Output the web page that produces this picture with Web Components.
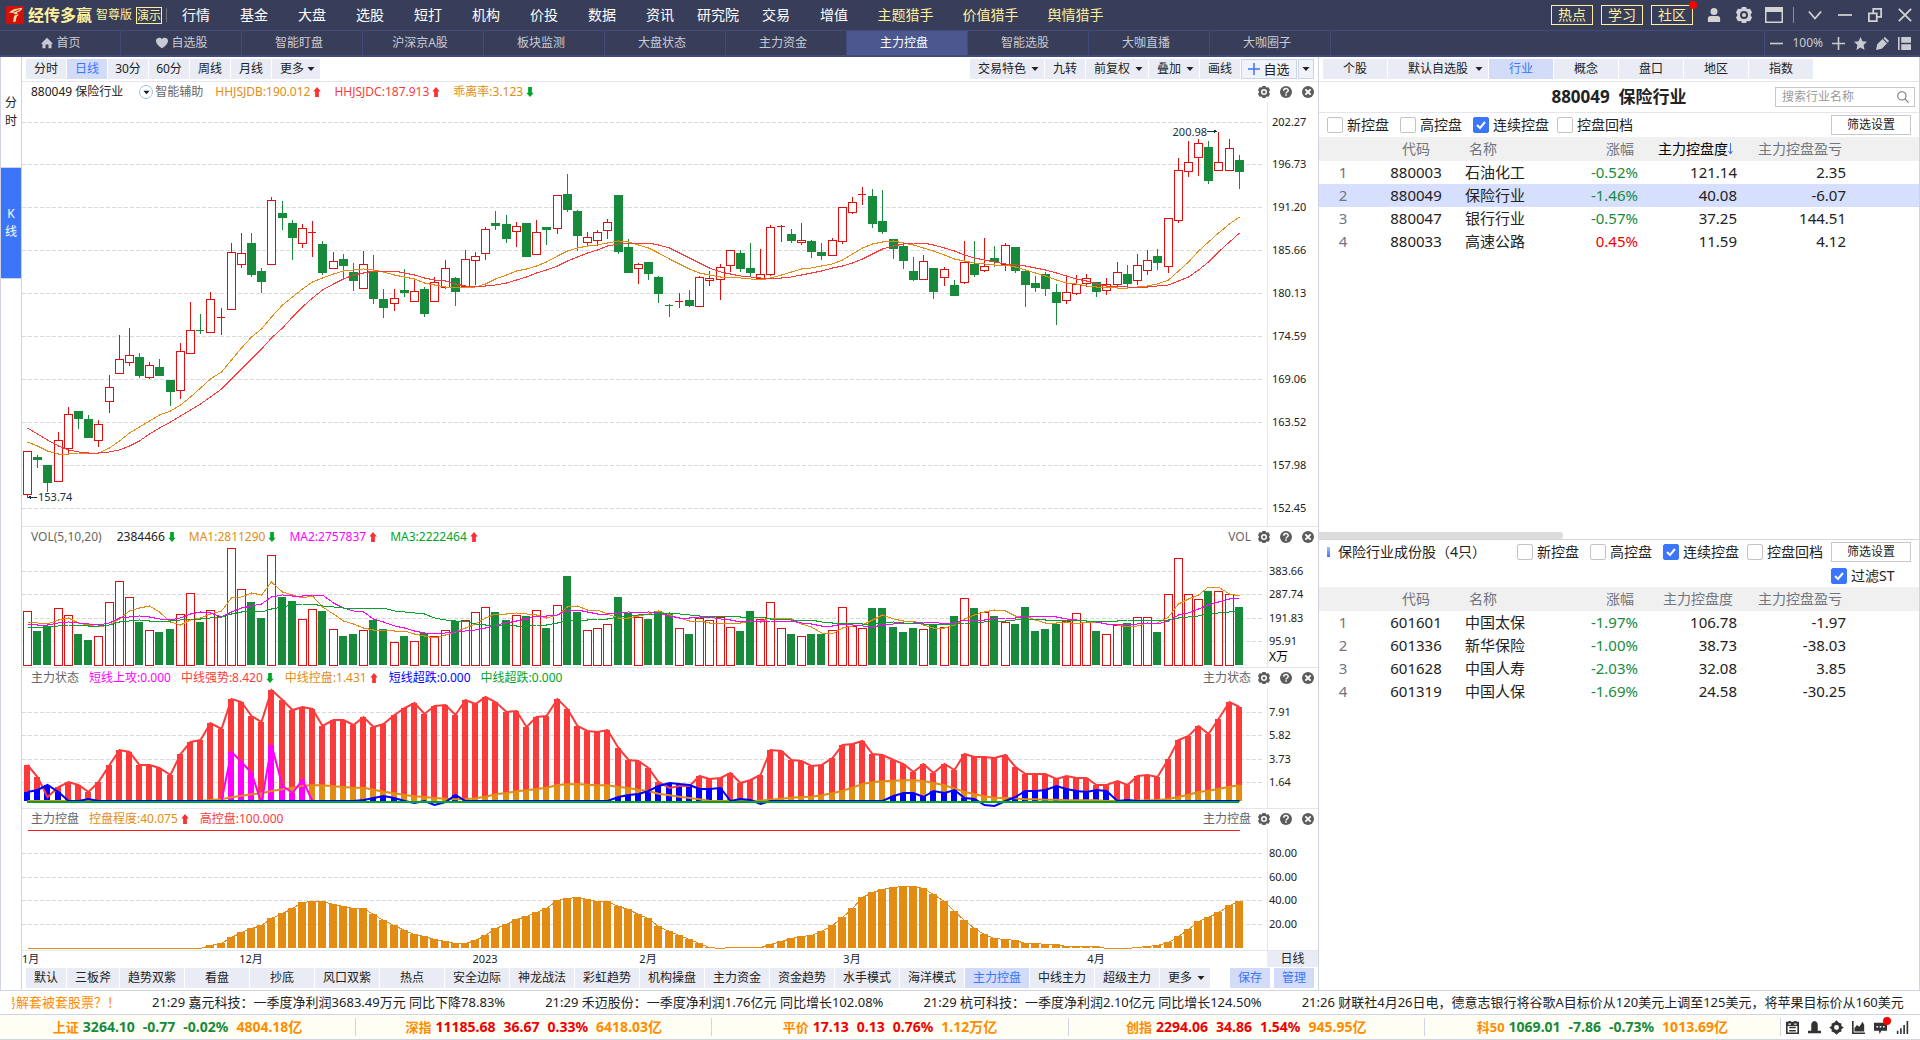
<!DOCTYPE html>
<html lang="zh-CN">
<head>
<meta charset="utf-8">
<title>经传多赢</title>
<style>
  html, body { margin: 0; height: 100%; }
  body {
    font: 12px/16px "Noto Sans", "Noto Sans CJK SC", sans-serif;
    color: #222;
    background: #fff;
  }
</style>
</head>
<body>
<trade-app></trade-app>

<script>
// ---------- helpers ----------
function define(name, html, Base = HTMLElement) {
  const template = document.createElement('template');
  template.innerHTML = html;
  customElements.define(name, class extends Base {
    constructor() {
      super();
      this.attachShadow({ mode: 'open' });
      this.shadowRoot.appendChild(template.content.cloneNode(true));
    }
  });
}

const ICONS = {
  home: '<path d="M8 1 0 9h2v6h4v-5h4v5h4V9h2z"/>',
  heart: '<path d="M8 15C2 11 0 8 0 5c0-4 6-5.500 8-2 2-3.500 8-2 8 2 0 3-2 6-8 10z"/>',
  user: '<circle cx="8" cy="4" r="4"/><path d="M1 16v-4q0-3 3-3h8q3 0 3 3v4z"/>',
  gear: '<path fill-rule="evenodd" d="M5 2 6 0h4l1 2 3-.2 2 3.400L14.500 8 16 10.800l-2 3.400-3-.2-1 2H6l-1-2-3 .2-2-3.400L1.500 8 0 5.200l2-3.400zM8 4a4 4 0 1 0 0 8 4 4 0 0 0 0-8z"/><circle cx="8" cy="8" r="2"/>',
  help: '<circle cx="8" cy="8" r="8"/><path d="M5 6.200C5 2.500 11 2.500 11 6 11 8 8 8 8 10" fill="none" stroke="#fff" stroke-width="2"/><rect x="7" y="11" width="2" height="2" fill="#fff"/>',
  cross: '<circle cx="8" cy="8" r="8"/><path d="m4.500 4.500 7 7m0-7-7 7" stroke="#fff" stroke-width="2.500"/>',
  panel: '<path fill-rule="evenodd" d="M-1 0h18v16H-1zM.5 5v9.500h15V5z"/>',
  chevron: '<path d="m1 4 7 8 7-8" fill="none" stroke="currentColor" stroke-width="2"/>',
  minus: '<path d="M0 7h16v2H0z"/>',
  plus: '<path d="M0 7h7V0h2v7h7v2H9v7H7V9H0z"/>',
  restore: '<path d="M1 6h9v9H1zM6 6V1h9v9h-5" fill="none" stroke="currentColor" stroke-width="2"/>',
  close: '<path d="m1 1 14 14m0-14L1 15" stroke="currentColor" stroke-width="2"/>',
  star: '<path d="m8 0 2.400 5.300 5.600.6-4.200 3.800L13 16l-5-3.200L3 16l1.200-6.300L0 5.900l5.600-.6z"/>',
  pencil: '<path d="m0 16 1.500-7L8 2.500l5.500 5.500L7 14.500zM9 1.500 11 0l5 5-1.500 2z"/>',
  layout: '<path d="M0 0h2v16H0zM4 0h12v7H4zM4 9h12v7H4z"/>',
  up: '<path d="m8 0 6 7h-3v9H5V7H2z"/>',
  down: '<path d="m8 16 6-7h-3V0H5v9H2z"/>',
  caret: '<path d="M1 4h14l-7 8z"/>',
  search: '<circle cx="6.500" cy="6.500" r="5.500" fill="none" stroke="currentColor" stroke-width="1.500"/><path d="m10.500 10.500 5 5" stroke="currentColor" stroke-width="1.500"/>',
  note: '<path fill-rule="evenodd" d="M0 1h3V0h3v1h4V0h3v1h3v15H0zM2 6v8h12V6zM3 3v1.500h3V3zM10 3v1.500h3V3z"/><path d="M4 7h8v2H4zM4 11h8v2H4z"/>',
  bell: '<path d="M4 12V5q0-4 4-5 4 1 4 5v7zM0 12h16v3H0z"/>',
  target: '<path fill-rule="evenodd" d="m8-1 3 3 3 1 0 3 3 2-3 2v3l-3 1-3 3-3-3-3-1v-3L-1 8l3-2V3l3-1zM8 5a3 3 0 1 0 0 6 3 3 0 0 0 0-6z"/>',
  chart: '<path d="M0 0h2v14h14v2H0z"/><path d="M3 13V9l3-4 3 2 4-6 2 4v8z"/>',
  chat: '<path d="M0 2h16v10H9l-2 4-1-4H0z"/><path d="M3 6h2v2H3zM7 6h2v2H7zM11 6h2v2h-2z" fill="#fff"/>',
  signal: '<path d="M1 12h2v4H1zM5 9h2v7H5zM9 5h2v11H9zM13 0h2v16h-2z"/>',
};

class AppIcon extends HTMLElement {
  constructor() {
    super();
    this.attachShadow({ mode: 'open' });
  }
  connectedCallback() {
    this.shadowRoot.innerHTML = `
      <style>
        :host { display: inline-block; width: 12px; height: 12px; flex: none; }
        svg { display: block; width: 100%; height: 100%; overflow: visible; fill: currentColor; }
      </style>
      <svg viewBox="0 0 16 16" aria-hidden="true">${ICONS[this.getAttribute('name')] || ''}</svg>`;
  }
}
customElements.define('app-icon', AppIcon);

// ---------- small controls ----------
define('flat-button', `
  <style>
    :host { display: block; height: 20px; min-width: 40px; }
    button {
      width: 100%; height: 100%; border: 0; padding: 0; font: inherit; color: #222;
      background: #e9ecf5; white-space: nowrap;
    }
    :host([active]) button { background: #d2dcf8; color: #3a75fa; }
    :host([outline]) button { background: #fff; border: 1px solid #c8c8c8; }
    :host([add]) button {
      background: #f1f3fa; border: 1px solid #ccd2e8; font-size: 13px;
      display: flex; align-items: center; justify-content: center;
    }
  </style>
  <button type="button"><slot></slot></button>`);

class FlatSelect extends HTMLElement {
  constructor() {
    super();
    this.attachShadow({ mode: 'open' });
  }
  connectedCallback() {
    const text = this.getAttribute('text');
    this.shadowRoot.innerHTML = `
      <style>
        :host { display: grid; height: 20px; align-items: center; background: #e9ecf5; }
        select {
          grid-area: 1 / 1; appearance: none; border: 0; background: none; font: inherit; color: #222;
          width: 100%; height: 20px; padding: 0 16px 0 8px; margin: 0; text-overflow: clip;
        }
        :host([center]) select { padding-left: 16px; text-align: center; text-align-last: center; }
        app-icon { grid-area: 1 / 1; justify-self: end; width: 8px; height: 8px; margin-right: 5px; pointer-events: none; }
      </style>
      <select aria-label="${text}"><option>${text}</option></select>
      <app-icon name="caret"></app-icon>`;
  }
}
customElements.define('flat-select', FlatSelect);

class CheckBox extends HTMLElement {
  constructor() {
    super();
    this.attachShadow({ mode: 'open' });
  }
  connectedCallback() {
    this.shadowRoot.innerHTML = `
      <style>
        :host { display: block; font-size: 14px; line-height: 20px; white-space: nowrap; }
        label { display: flex; align-items: center; gap: 4px; }
        .box { display: grid; width: 16px; height: 16px; }
        .box > * { grid-area: 1 / 1; }
        input {
          appearance: none; box-sizing: border-box; width: 16px; height: 16px; margin: 0;
          border: 1px solid #c4c4c4; border-radius: 2px; background: #fff;
        }
        input:checked { background: #3a75fa; border-color: #3a75fa; }
        svg { display: none; fill: none; stroke: #fff; stroke-width: 2; pointer-events: none; }
        input:checked + svg { display: block; }
      </style>
      <label>
        <span class="box">
          <input type="checkbox" ${this.hasAttribute('checked') ? 'checked' : ''}>
          <svg viewBox="0 0 16 16"><path d="m4 8 3 3 5-6"/></svg>
        </span>
        <slot></slot>
      </label>`;
  }
}
customElements.define('check-box', CheckBox);

// ---------- title bar ----------
define('title-bar', `
  <style>
    :host {
      display: flex; align-items: center; height: 30px; box-sizing: content-box;
      background: #383e5a; border-bottom: 1px solid #424c7c; color: #fff;
      font-size: 14px; line-height: 20px; white-space: nowrap;
    }
    .brand { display: flex; align-items: center; width: 167px; color: #fff09a; flex: none; }
    .logo { width: 20px; height: 20px; margin: 0 4px 0 6px; }
    b { font-size: 16px; margin-right: 4px; }
    small { font-size: 12px; }
    .demo { border: 1px solid #fff09a; font-size: 12px; line-height: 15px; margin-left: 4px; }
    .bar { width: 1px; height: 14px; background: #76716e; margin-left: 4px; }
    nav { display: flex; flex: 1; }
    a { color: inherit; text-decoration: none; width: 58px; text-align: center; }
    a.hot { width: 85px; color: #fff09a; }
    .links { display: flex; gap: 8px; margin-right: 14px; }
    .links a {
      position: relative; box-sizing: border-box; width: 42px; height: 20px; line-height: 18px;
      border: 1px solid #fff09a; color: #fff09a;
    }
    .dot { position: absolute; right: -5px; top: -5px; width: 8px; height: 8px; border-radius: 50%; background: #f00; }
    .tools { display: flex; align-items: center; color: #d3d3d3; }
    .tools app-icon { margin: 0 8px; width: 14px; height: 14px; }
    .tools app-icon.lg { width: 16px; height: 16px; margin: 0 7px; }
    .sep { width: 1px; height: 16px; background: #8b8e9c; margin: 0 6px 0 4px; }
    .win { display: flex; }
  </style>
  <div class="brand">
    <svg class="logo" viewBox="0 0 20 20"><rect width="20" height="20" rx="2" fill="#d4100c"/>
      <path d="M3 8Q7 3 12 3l6-1q-1 4-6 5l2 3q-3 1-3 7l-3 1q0-6 2-9Q6 6 3 8z" fill="#ffe2a0"/>
      <path d="m8 7 7-3M9 10l4-1" stroke="#d4100c" fill="none"/></svg>
    <b>经传多赢</b><small>智尊版</small><span class="demo">演示</span><span class="bar"></span>
  </div>
  <nav>
    <a href="#">行情</a><a href="#">基金</a><a href="#">大盘</a><a href="#">选股</a><a href="#">短打</a>
    <a href="#">机构</a><a href="#">价投</a><a href="#">数据</a><a href="#">资讯</a><a href="#">研究院</a>
    <a href="#">交易</a><a href="#">增值</a><a class="hot" href="#">主题猎手</a>
    <a class="hot" href="#">价值猎手</a><a class="hot" href="#">舆情猎手</a>
  </nav>
  <div class="links">
    <a href="#">热点</a><a href="#">学习</a><a href="#">社区<span class="dot"></span></a>
  </div>
  <div class="tools">
    <app-icon name="user" style="margin-left:0"></app-icon>
    <app-icon class="lg" name="gear"></app-icon>
    <app-icon class="lg" name="panel"></app-icon>
    <span class="sep"></span>
    <div class="win">
      <app-icon name="chevron"></app-icon><app-icon name="minus"></app-icon>
      <app-icon name="restore"></app-icon><app-icon name="close"></app-icon>
    </div>
  </div>`);

define('nav-tabs', `
  <style>
    :host {
      display: flex; height: 24px; background: #383e5a; border-bottom: 2px solid #424c7c;
      color: #c9cbd3; line-height: 24px; white-space: nowrap;
    }
    nav { display: flex; flex: 1; }
    a {
      box-sizing: border-box; width: 121px; border-right: 1px solid #424c7c; color: inherit; padding-right: 6px;
      text-decoration: none; display: flex; align-items: center; justify-content: center; gap: 3px;
    }
    a.pic { padding: 0 0 0 2px; }
    a.on { background: #4b578e; color: #fff; }
    .zoom { display: flex; align-items: center; gap: 9px; padding: 0 9px 0 5px; border-left: 1px solid #424c7c; }
    .zoom app-icon { width: 13px; height: 13px; }
  </style>
  <nav>
    <a class="pic" href="#"><app-icon name="home"></app-icon>首页</a>
    <a class="pic" href="#"><app-icon name="heart"></app-icon>自选股</a>
    <a href="#">智能盯盘</a><a href="#">沪深京A股</a><a href="#">板块监测</a><a href="#">大盘状态</a>
    <a href="#">主力资金</a><a href="#" class="on">主力控盘</a><a href="#">智能选股</a>
    <a href="#">大咖直播</a><a href="#">大咖圈子</a>
  </nav>
  <div class="zoom">
    <app-icon name="minus"></app-icon>100%<app-icon name="plus"></app-icon>
    <app-icon name="star"></app-icon><app-icon name="pencil"></app-icon><app-icon name="layout"></app-icon>
  </div>`);

define('side-strip', `
  <style>
    :host { display: flex; flex-direction: column; width: 20px; border: solid #cfd3e3; border-width: 0 1px; background: #fff; }
    button {
      border: 0; border-bottom: 1px solid #cfd3e3; background: none; padding: 0; font: inherit;
      line-height: 18px; color: #222; height: 111px; width: 20px;
    }
    button.on { background: #3a75fa; color: #fff; }
    span { display: block; }
  </style>
  <button type="button"><span>分</span><span>时</span></button>
  <button type="button" class="on"><span>K</span><span>线</span></button>`);

define('period-bar', `
  <style>
    :host {
      display: flex; gap: 1px; height: 20px; padding: 2px 4px; border-bottom: 1px solid #e4e6ee;
    }
    .gap { flex: 1; }
    .more { width: 48px; }
    app-icon { color: #3a75fa; margin-right: 3px; }
  </style>
  <flat-button>分时</flat-button><flat-button active>日线</flat-button><flat-button>30分</flat-button>
  <flat-button>60分</flat-button><flat-button>周线</flat-button><flat-button>月线</flat-button>
  <flat-select class="more" text="更多"></flat-select>
  <span class="gap"></span>
  <flat-select style="width:74px" text="交易特色"></flat-select>
  <flat-button>九转</flat-button>
  <flat-select style="width:62px" text="前复权"></flat-select>
  <flat-select style="width:50px" text="叠加"></flat-select>
  <flat-button>画线</flat-button>
  <flat-button add style="width:56px"><app-icon name="plus"></app-icon>自选</flat-button>
  <flat-button add style="min-width:16px"><app-icon name="caret" style="color:#222;width:8px;height:8px;margin:0"></app-icon></flat-button>`);

// ---------- chart data ----------
// One candle per entry: up/down, high, body top, body bottom, low (plot units, top = 22)
const CANDLES = `
r371,371,415,418 g375,377,380,388 g385,385,403,412 r352,360,402,402 r327,334,369,373 g331,331,339,349
g335,339,358,358 r340,344,361,367 r295,307,322,333 r255,279,294,294 r248,275,283,286 g273,277,296,298
r282,285,298,299 g279,287,296,296 g300,300,312,326 r263,271,311,319 r222,250,274,274 g234,250,251,254
r212,219,253,253 r228,237,238,255 r163,172,230,230 r153,173,185,188 g153,163,195,197 g188,191,202,213
r117,120,185,185 g121,133,138,150 g140,143,158,180 r144,148,164,168 r141,152,153,177 g161,164,193,195
r172,181,189,189 g174,179,186,199 g183,192,201,211 r171,184,209,209 g175,191,219,224 g209,219,228,238
r209,218,224,231 g189,210,213,217 r200,211,222,222 g207,209,234,237 r197,202,222,222 r180,188,208,209
g197,198,212,226 r170,179,207,207 r172,176,181,205 r147,149,174,180 g131,143,146,150 g135,144,159,163
r142,146,152,167 g143,143,177,177 r140,152,175,175 g147,147,150,165 r115,115,149,154 g94,114,130,132
g130,131,156,171 r152,157,163,166 r150,152,161,166 r139,142,151,159 g115,115,172,174 g159,167,193,193
r183,184,189,204 g182,182,194,200 g196,197,214,223 g224,225,226,237 r213,221,222,228 g210,220,226,227
r196,197,227,227 r191,198,201,206 r184,187,200,220 r170,170,186,192 g170,173,189,192 g163,188,193,197
r169,194,199,199 r145,147,195,196 r145,146,147,162 g149,154,161,163 r143,160,163,165 g160,161,172,178
g163,172,176,180 r158,160,176,176 r127,127,162,164 r117,122,133,134 r107,114,115,125 g109,116,144,148
g110,141,152,154 g159,159,169,179 g163,166,181,189 g177,191,200,201 r175,181,200,200 g188,188,212,219
r187,189,198,206 g200,205,216,216 r161,182,203,204 g161,184,195,197 r158,186,191,192 g166,178,182,187
r163,165,185,191 g167,167,191,193 g191,191,205,227 g196,203,208,212 g192,194,209,216 g204,212,223,245
r196,212,221,224 r195,204,214,215 r194,198,204,207 g202,202,212,217 r198,204,211,215 r182,192,205,208
g185,194,204,209 r174,185,201,205 r170,180,191,195 g169,176,183,190 r138,138,187,193 r78,90,141,143
r61,82,92,97 r59,63,78,96 g61,67,101,104 r52,82,91,91 r59,68,91,91 g75,80,92,109`
  .trim().split(/\s+/).map(s => [s[0] === 'r', ...s.slice(1).split(',').map(Number)]);

const LINE_B = [362,366,371,374,374,373,373,373,368,361,353,347,341,335,331,325,317,308,299,292,280,268,257,249,
  237,225,217,209,202,198,194,191,190,189,190,192,195,197,199,203,205,207,207,208,207,204,199,195,191,189,186,182,
  176,171,168,166,165,163,161,162,165,168,173,179,184,189,193,195,197,197,198,199,200,198,195,192,189,188,186,184,
  180,174,168,164,162,161,163,165,168,171,175,179,181,183,184,185,185,187,190,193,196,200,203,204,206,207,207,208,
  208,207,206,204,200,191,182,171,162,153,144,137];
const LINE_C = [348,354,360,366,370,372,373,373,372,370,366,361,354,348,342,336,330,324,317,309,299,289,279,269,
  258,248,237,227,218,210,204,199,195,193,191,191,191,193,195,198,200,201,204,206,206,206,205,203,200,197,193,190,
  186,181,177,173,170,166,164,163,163,163,165,168,173,178,183,188,192,194,196,197,198,198,198,197,195,193,191,188,
  186,183,179,174,169,166,164,163,163,165,168,171,175,178,180,182,184,185,186,188,190,193,196,199,201,204,206,206,
  207,207,207,206,205,201,197,190,182,172,162,153];
const VOLUME = [54,34,39,57,50,31,25,29,63,84,68,43,35,33,36,51,72,43,55,49,117,76,63,47,110,68,64,46,56,54,36,29,
  31,35,45,36,23,29,24,32,29,35,44,45,53,58,53,45,50,49,55,37,60,89,53,35,37,41,68,52,48,46,54,52,37,31,47,45,48,38,
  34,54,46,63,37,31,29,31,31,35,58,39,37,57,57,38,33,37,36,40,38,49,67,57,53,49,43,41,58,34,36,41,44,52,43,34,31,40,
  42,48,48,33,71,107,71,66,74,74,71,58];
// volumes of the 19 sessions before the first visible one, for the moving averages
const VOLUME_BEFORE = [...Array(10).fill(35), ...Array(5).fill(39), ...Array(4).fill(40)];
const STRONG = [36,24,4,14,19,16,9,19,36,51,49,36,36,33,26,47,59,61,78,72,102,99,85,79,111,101,91,94,92,75,81,81,76,
  84,74,77,86,93,98,87,95,96,86,101,97,104,99,89,90,74,84,85,102,92,75,70,69,71,53,41,40,33,19,13,15,15,25,22,23,28,
  18,21,26,51,50,41,40,35,36,43,56,57,60,47,46,41,37,29,37,28,37,31,47,44,44,43,46,34,27,27,27,22,25,23,23,16,16,20,
  16,25,26,24,42,61,65,75,67,82,99,94];
const CONTROL = [...Array(18).fill(0),3,5,11,16,20,23,30,35,40,46,47,47,44,42,40,40,34,28,23,18,14,12,9,7,5,5,8,13,
  20,24,29,32,36,40,48,50,51,49,47,47,42,39,34,30,22,17,13,9,5,1,0,1,1,1,1,4,7,10,12,13,17,23,31,40,51,56,59,61,62,
  62,60,54,47,37,28,20,14,10,9,8,5,5,4,4,2,2,2,2,0,0,0,1,2,3,6,12,19,27,31,36,43,47];
// sparse series: index -> height
const OVERSOLD = {0:9,1:11,2:16,3:9,6:2,33:1,34:3,35:5,36:3,38:-2,40:-4,41:-1,42:6,58:4,59:6,60:7,61:10,62:15,63:18,
  64:17,65:16,66:12,67:12,68:13,70:2,71:1,72:-3,85:5,86:8,87:8,88:4,89:10,90:8,91:11,92:3,93:2,94:-4,95:-5,97:4,
  98:10,99:10,100:11,101:15,102:12,103:10,104:9,105:11,106:10,108:1};
const ATTACK = {20:49,21:39,22:28,23:-2,24:56,25:15,26:8,27:21};

const RED = '#e60c0c', GREEN = '#178a3c', ORANGE = '#e28c14', PINK = '#ff00ff', LIME = '#00a42a', BLUE = '#0000ff', TOMATO = '#fb3b3b';
const AXIS = 51;

const rect = (x, y, w, h, c) => `<rect x="${x}" y="${y}" width="${w}" height="${h}" fill="${c}"/>`;
const frame = (x, y, w, h) => `<rect x="${x + .5}" y="${y + .5}" width="${w - 1}" height="${Math.max(h - 1, 1)}" fill="#fff" stroke="${RED}"/>`;
const line = (xs, ys, c, w = 1) =>
  `<polyline points="${xs.map((x, i) => `${x + .5},${ys[i]}`).join(' ')}" fill="none" stroke="${c}" stroke-width="${w}"/>`;
const average = (n) => VOLUME.map((v, i) => {
  const all = [...VOLUME_BEFORE, ...VOLUME];
  return all.slice(i + 20 - n, i + 20).reduce((a, b) => a + b) / n;
});
const spread = (sparse) => VOLUME.map((v, i) => sparse[i] || 0);

const PLOTS = {
  price(xs, h) {
    const k = h / 424;
    const y = v => Math.round((v - 22) * k);
    let out = CANDLES.map(([up, hi, top, bottom, lo], i) => {
      const x = xs[i], c = up ? RED : GREEN;
      const wick = rect(x, y(hi), 1, y(lo) - y(hi), c);
      if (bottom - top < 2) return wick + rect(x - 4, y(top), 8, 1, c);
      return wick + (up ? frame : rect)(x - 4, y(top), 9, y(bottom) - y(top), c);
    }).join('');
    out += line(xs, LINE_B.map(y), ORANGE) + line(xs, LINE_C.map(y), TOMATO);
    const hx = xs[117], hy = y(52), lx = xs[0], ly = y(418);
    out += `<g fill="#1a2f40"><text x="${hx - 11}" y="${hy + 4}" text-anchor="end">200.98</text>
      <path d="M${hx - 11} ${hy - 1}h7v-1l4 1-4 2v-1h-7z"/>
      <text x="${lx + 11}" y="${ly + 3}">153.74</text><path d="M${lx + 10} ${ly - 1}h-6v-1l-4 1 4 2v-1h6z"/></g>`;
    return out;
  },
  volume(xs, h) {
    const base = h - 2;
    let out = VOLUME.map((v, i) => CANDLES[i][0]
      ? frame(xs[i] - 4, base - v, 9, v + 1)
      : rect(xs[i] - 4, base - v, 8, v, GREEN)).join('');
    [[5, ORANGE], [10, PINK], [20, LIME]].forEach(([n, c]) => {
      out += line(xs, average(n).map(v => Math.round(base - v)), c);
    });
    return out;
  },
  state(xs, h) {
    const base = h - 7;
    const bars = (vs, c) => vs.map((v, i) => v > 0 ? rect(xs[i] - 3, base - v, 6, v, c) : '').join('');
    const curve = (vs, c) => `<g shape-rendering="auto">${line(xs, vs.map(v => base - v), c, 2)}</g>`;
    const mid = CONTROL.map(v => v / 3);
    const blue = spread(OVERSOLD), pink = spread(ATTACK);
    return bars(STRONG, TOMATO) + bars(mid, ORANGE) + bars(pink, PINK) + bars(blue, BLUE)
      + curve(STRONG, TOMATO) + curve(mid, ORANGE)
      + `<g shape-rendering="auto">${line(xs.slice(19, 29), pink.slice(19, 29).map(v => base - v), PINK, 2)}</g>`
      + curve(blue, BLUE) + rect(xs[0], base, xs[119] - xs[0], 2, LIME);
  },
  control(xs, h) {
    const base = h - 2;
    return line([xs[0], xs[119]], [1.5, 1.5], '#fb2020')
      + CONTROL.map((v, i) => v ? rect(xs[i] - 4, base - v, 8, v, ORANGE) : '').join('')
      + line(xs, CONTROL.map(v => base - v + .5), ORANGE);
  },
};
const GRIDS = {
  price: [[20, '202.27'], [62, '196.73'], [105, '191.20'], [148, '185.66'], [191, '180.13'], [234, '174.59'],
    [277, '169.06'], [320, '163.52'], [363, '157.98'], [406, '152.45']],
  volume: [[24, '383.66'], [47, '287.74'], [71, '191.83'], [94, '95.91']],
  state: [[24, '7.91'], [47, '5.82'], [71, '3.73'], [94, '1.64']],
  control: [[24, '80.00'], [48, '60.00'], [71, '40.00'], [95, '20.00']],
};

// x of every session in a plot of the given width
function sessions(width) {
  const pitch = (width - 33.2) / 119;
  return VOLUME.map((v, i) => Math.floor(5.55 + i * pitch));
}

class ChartPane extends HTMLElement {
  constructor() {
    super();
    this.attachShadow({ mode: 'open' });
    this.shadowRoot.innerHTML = `
      <style>
        :host { display: flex; flex-direction: column; border-bottom: 1px solid #e4e6ee; height: 140px; }
        header { display: flex; align-items: center; height: 20px; padding: 0 4px 0 9px; gap: var(--legend-gap, 10px); color: #666; white-space: nowrap; }
        .tools { display: flex; margin-left: auto; align-items: center; }
        .tools app-icon { color: #5c5c5c; margin-left: 10px; }
        .tools app-icon[name=gear] { margin-left: 7px; }
        .plot { flex: 1; min-height: 0; overflow: hidden; contain: size; }
        svg { display: block; }
        text { font-size: 11px; }
      </style>
      <header><slot></slot><span class="tools"><slot name="title"></slot>
        <app-icon name="gear"></app-icon><app-icon name="help"></app-icon><app-icon name="cross"></app-icon></span></header>
      <div class="plot"></div>`;
    this.$plot = this.shadowRoot.querySelector('.plot');
  }
  connectedCallback() {
    this.render();
    new ResizeObserver(() => this.render()).observe(this.$plot);
  }
  render() {
    const w = this.$plot.clientWidth, h = this.$plot.clientHeight;
    if (!w || !h) return;
    const kind = this.getAttribute('kind');
    const right = w - AXIS;
    const k = kind === 'price' ? h / 424 : 1;
    const grid = GRIDS[kind].map(([y, label]) => {
      const gy = Math.round(y * k);
      return `<line x1="0" x2="${right - 5}" y1="${gy + .5}" y2="${gy + .5}" stroke="#dadada" stroke-dasharray="4 2"/>
        <text x="${right + (kind === 'price' ? 5 : 2)}" y="${gy + 4}" fill="#222">${label}</text>`;
    }).join('');
    this.$plot.innerHTML = `<svg width="${w}" height="${h}" shape-rendering="crispEdges">
      <line x1="${right + .5}" x2="${right + .5}" y1="0" y2="${h}" stroke="#e4e6ee"/>
      ${grid}${kind === 'volume' ? `<text x="${right + 2}" y="${h - 6}" style="font-size:12px">X万</text>` : ''}
      ${PLOTS[kind](sessions(right), h)}</svg>`;
  }
}
customElements.define('chart-pane', ChartPane);

// coloured readout with an optional direction arrow
class LegendItem extends HTMLElement {
  constructor() {
    super();
    this.attachShadow({ mode: 'open' });
  }
  connectedCallback() {
    const dir = this.getAttribute('dir-to');
    this.shadowRoot.innerHTML = `
      <style>
        :host { display: flex; align-items: center; gap: 2px; }
        app-icon { width: 10px; height: 10px; }
        [name=up] { color: #fb3030; }
        [name=down] { color: #00a42a; }
      </style>
      <slot></slot>${dir ? `<app-icon name="${dir}"></app-icon>` : ''}`;
    this.style.color = this.getAttribute('color');
  }
}
customElements.define('legend-item', LegendItem);

class DateAxis extends HTMLElement {
  constructor() {
    super();
    this.attachShadow({ mode: 'open' });
    this.shadowRoot.innerHTML = `
      <style>
        :host { display: flex; height: 16px; }
        div { flex: 1; min-width: 0; }
        svg { display: block; }
        text { font-size: 11px; fill: #222; }
        span { width: 51px; background: #e9ecf5; text-align: center; }
      </style>
      <div></div><span>日线</span>`;
    this.$box = this.shadowRoot.querySelector('div');
  }
  connectedCallback() {
    this.render();
    new ResizeObserver(() => this.render()).observe(this.$box);
  }
  render() {
    const w = this.$box.clientWidth;
    const xs = sessions(w);
    this.$box.innerHTML = `<svg width="${w}" height="16"><text x="0" y="12">1月</text>` +
      [[22, '12月'], [45, '2023'], [61, '2月'], [81, '3月'], [105, '4月']]
        .map(([i, t]) => `<text x="${xs[i]}" y="12" text-anchor="middle">${t}</text>`).join('') + '</svg>';
  }
}
customElements.define('date-axis', DateAxis);

define('template-bar', `
  <style>
    :host { display: flex; gap: 1px; height: 20px; padding: 1px 4px 2px; }
    flat-button { flex: 0 0 64px; }
    .s { flex-basis: 40px; }
    .m { flex-basis: 52px; }
    .gap { flex: 1; }
    .save { margin-right: 3px; }
  </style>
  <flat-button class="s">默认</flat-button><flat-button class="m">三板斧</flat-button>
  <flat-button>趋势双紫</flat-button><flat-button>看盘</flat-button><flat-button>抄底</flat-button>
  <flat-button>风口双紫</flat-button><flat-button>热点</flat-button><flat-button>安全边际</flat-button>
  <flat-button>神龙战法</flat-button><flat-button>彩虹趋势</flat-button><flat-button>机构操盘</flat-button>
  <flat-button>主力资金</flat-button><flat-button>资金趋势</flat-button><flat-button>水手模式</flat-button>
  <flat-button>海洋模式</flat-button><flat-button active>主力控盘</flat-button><flat-button>中线主力</flat-button>
  <flat-button>超级主力</flat-button><flat-select style="width:50px" text="更多"></flat-select>
  <span class="gap"></span>
  <flat-button class="s save" active>保存</flat-button><flat-button class="s" active>管理</flat-button>`);

define('chart-column', `
  <style>
    :host { display: flex; flex-direction: column; }
    .main { flex: 1; height: auto; min-height: 200px; }
    .wide { --legend-gap: 12px; }
    .tall { height: 141px; }
    .name { color: #222; margin-right: 4px; }
    .label { margin-right: 3px; }
    .assist { display: flex; align-items: center; gap: 2px; }
    .pick { width: 14px; height: 14px; border: 1px solid #9cc3d6; border-radius: 50%; display: grid; place-items: center; color: #123; box-sizing: border-box; }
    .pick app-icon { width: 7px; height: 7px; }
  </style>
  <period-bar></period-bar>
  <chart-pane class="main wide" kind="price">
    <span class="name">880049 保险行业</span>
    <span class="assist"><span class="pick"><app-icon name="caret"></app-icon></span>智能辅助</span>
    <legend-item color="#e28c14" dir-to="up">HHJSJDB:190.012</legend-item>
    <legend-item color="#fb3b3b" dir-to="up">HHJSJDC:187.913</legend-item>
    <legend-item color="#e28c14" dir-to="down">乖离率:3.123</legend-item>
  </chart-pane>
  <chart-pane class="wide" kind="volume">
    <span class="label">VOL(5,10,20)</span>
    <legend-item color="#222" dir-to="down">2384466</legend-item>
    <legend-item color="#e28c14" dir-to="down">MA1:2811290</legend-item>
    <legend-item color="#ff00ff" dir-to="up">MA2:2757837</legend-item>
    <legend-item color="#00a42a" dir-to="up">MA3:2222464</legend-item>
    <span slot="title">VOL</span>
  </chart-pane>
  <chart-pane kind="state">
    <span>主力状态</span>
    <legend-item color="#ff00ff">短线上攻:0.000</legend-item>
    <legend-item color="#fb3b3b" dir-to="down">中线强势:8.420</legend-item>
    <legend-item color="#e28c14" dir-to="up">中线控盘:1.431</legend-item>
    <legend-item color="#0000ff">短线超跌:0.000</legend-item>
    <legend-item color="#00a42a">中线超跌:0.000</legend-item>
    <span slot="title">主力状态</span>
  </chart-pane>
  <chart-pane class="tall" kind="control">
    <span>主力控盘</span>
    <legend-item color="#e28c14" dir-to="up">控盘程度:40.075</legend-item>
    <legend-item color="#fb3b3b">高控盘:100.000</legend-item>
    <span slot="title">主力控盘</span>
  </chart-pane>
  <date-axis></date-axis>
  <template-bar></template-bar>`);

// ---------- right column ----------
const TABLES = {
  sectors: {
    sorted: true, selected: 1,
    rows: [['880003', '石油化工', '-0.52%', '121.14', '2.35'], ['880049', '保险行业', '-1.46%', '40.08', '-6.07'],
      ['880047', '银行行业', '-0.57%', '37.25', '144.51'], ['880033', '高速公路', '0.45%', '11.59', '4.12']],
  },
  stocks: {
    rows: [['601601', '中国太保', '-1.97%', '106.78', '-1.97'], ['601336', '新华保险', '-1.00%', '38.73', '-38.03'],
      ['601628', '中国人寿', '-2.03%', '32.08', '3.85'], ['601319', '中国人保', '-1.69%', '24.58', '-30.25']],
  },
};

class StockTable extends HTMLElement {
  constructor() {
    super();
    this.attachShadow({ mode: 'open' });
  }
  connectedCallback() {
    const { rows, sorted, selected } = TABLES[this.getAttribute('source')];
    this.shadowRoot.innerHTML = `
      <style>
        :host { display: block; }
        table { width: 100%; table-layout: fixed; border-collapse: collapse; font-size: 15px; line-height: 23px; white-space: nowrap; }
        th { background: #f0f0f0; font-weight: normal; font-size: 14px; line-height: 24px; color: #70757f; }
        th, td { padding: 0; text-align: right; }
        th:nth-child(n+4) { padding-right: 4px; }
        td:nth-child(1) { color: #70757f; }
        :is(th, td):nth-child(-n+2) { text-align: center; }
        :is(th, td):nth-child(3) { text-align: left; }
        th:nth-child(3) { padding-left: 4px; }
        .sel { background: #d6dffd; }
        .down { color: #178a3c; }
        .up { color: #f00000; }
        .sort { color: #000; }
        .sort svg { width: 5px; height: 12px; fill: none; stroke: #3a75fa; vertical-align: -1px; }
      </style>
      <table>
        <colgroup><col style="width:48px"><col style="width:98px"><col style="width:95px"><col style="width:78px">
          <col style="width:99px"><col style="width:109px"><col></colgroup>
        <thead><tr><th></th><th>代码</th><th>名称</th><th>涨幅</th>
          <th ${sorted ? 'class="sort"' : ''}>主力控盘度${sorted ? '<svg viewBox="0 0 5 12"><path d="M2.500 0v11M.5 8l2 3 2-3"/></svg>' : ''}</th><th>主力控盘盈亏</th><th></th></tr></thead>
        <tbody>${rows.map((r, i) => `<tr class="${i === selected ? 'sel' : ''}"><td>${i + 1}</td>${r.map((c, j) =>
          `<td${j === 2 ? ` class="${c[0] === '-' ? 'down' : 'up'}"` : ''}>${c}</td>`).join('')}<td></td></tr>`).join('')}</tbody>
      </table>`;
  }
}
customElements.define('stock-table', StockTable);

define('sector-panel', `
  <style>
    :host { display: flex; flex-direction: column; border-left: 1px solid #cfd3e3; border-right: 1px solid #cfd3e3; }
    .tabs { display: flex; gap: 1px; height: 20px; padding: 2px 4px; border-bottom: 1px solid #e4e6ee; }
    .tabs flat-button { width: 64px; }
    .head { display: grid; grid-template-columns: 1fr auto 1fr; align-items: center; height: 30px; border-bottom: 1px solid #e4e6ee; }
    h1 { grid-column: 2; margin: 0; font-size: 17px; line-height: 24px; white-space: pre; }
    .search { justify-self: end; display: flex; align-items: center; box-sizing: border-box; width: 140px; height: 20px; margin-right: 4px; border: 1px solid #c8c8c8; }
    input { flex: 1; min-width: 0; border: 0; outline: 0; background: none; font: inherit; padding: 0 6px; }
    input::placeholder { color: #9a9a9a; }
    .search app-icon { color: #777; margin-right: 5px; }
    .filters { display: flex; align-items: center; gap: 11px; height: 24px; padding: 0 8px; }
    .filters flat-button { width: 80px; margin-left: auto; }
    .filters check-box[checked] { margin-right: -3px; }
    .upper { height: 450px; box-sizing: border-box; }
    .scroll { height: 7px; border-bottom: 1px solid #cfd3e3; }
    .thumb { width: 244px; height: 7px; background: #dcdcdc; border-radius: 0 3px 3px 0; }
    .mark { width: 3px; height: 10px; background: linear-gradient(#a9c3ff, #3a75fa); }
    h2 { margin: 0 auto 0 -3px; font-size: 14px; line-height: 20px; font-weight: normal; white-space: nowrap; }
    .right flat-button { margin-left: -3px; }
    .st { display: flex; justify-content: flex-end; height: 23px; align-items: center; padding: 0 8px; }
    .st check-box { width: 80px; }
  </style>
  <div class="tabs">
    <flat-button>个股</flat-button><flat-select center style="width:100px" text="默认自选股"></flat-select>
    <flat-button active>行业</flat-button><flat-button>概念</flat-button><flat-button>盘口</flat-button>
    <flat-button>地区</flat-button><flat-button>指数</flat-button>
  </div>
  <div class="upper">
    <div class="head">
      <h1>880049  保险行业</h1>
      <label class="search"><input type="text" placeholder="搜索行业名称" aria-label="搜索行业名称"><app-icon name="search"></app-icon></label>
    </div>
    <div class="filters">
      <check-box>新控盘</check-box><check-box>高控盘</check-box><check-box checked>连续控盘</check-box>
      <check-box>控盘回档</check-box><flat-button outline>筛选设置</flat-button>
    </div>
    <stock-table source="sectors"></stock-table>
  </div>
  <div class="scroll"><div class="thumb"></div></div>
  <div class="filters right">
    <span class="mark"></span><h2>保险行业成份股（4只）</h2>
    <check-box>新控盘</check-box><check-box>高控盘</check-box><check-box checked>连续控盘</check-box>
    <check-box>控盘回档</check-box><flat-button outline>筛选设置</flat-button>
  </div>
  <div class="st"><check-box checked>过滤ST</check-box></div>
  <stock-table source="stocks"></stock-table>`);

// ---------- bottom bars ----------
define('news-ticker', `
  <style>
    :host { display: block; border-top: 1px solid #cfd3e3; padding: 0 12px; height: 23px; }
    div { display: flex; overflow: hidden; font-size: 13px; line-height: 23px; white-space: nowrap; color: #222; }
    a { color: inherit; text-decoration: none; flex: none; margin-right: 40px; }
    .ad { color: #ff8c00; width: 108px; margin-right: 32px; display: flex; justify-content: flex-end; overflow: hidden; }
    .ad span { flex: none; }
  </style>
  <div>
    <a class="ad" href="#"><span>易解套被套股票？！</span></a>
    <a href="#">21:29 嘉元科技：一季度净利润3683.49万元 同比下降78.83%</a>
    <a href="#">21:29 禾迈股份：一季度净利润1.76亿元 同比增长102.08%</a>
    <a href="#">21:29 杭可科技：一季度净利润2.10亿元 同比增长124.50%</a>
    <a href="#">21:26 财联社4月26日电，德意志银行将谷歌A目标价从120美元上调至125美元，将苹果目标价从160美元</a>
  </div>`);

define('index-quote', `
  <style>
    :host {
      flex: 1; display: flex; align-items: center; justify-content: center; gap: 8px;
      height: 18px; border-right: 1px solid #cfd3e3; font-weight: bold; font-size: 14px; color: #ff8c00; white-space: nowrap;
    }
    .q { display: flex; gap: 8px; color: #f00000; }
    :host([down]) .q { color: #178a3c; }
    .n { margin-right: -4px; font-size: 13px; }
  </style>
  <span class="n"><slot name="name"></slot></span><span class="q"><slot></slot></span><slot name="turnover"></slot>`);

define('index-bar', `
  <style>
    :host {
      display: flex; align-items: center; height: 24px; border: solid #cfd3e3; border-width: 1px 0;
      background: #fffef4;
    }
    .tools { display: flex; width: 139px; background: #fff; height: 24px; align-items: center; color: #333; }
    .tools span { position: relative; width: 22px; height: 13px; text-align: center; line-height: 13px; }
    .tools app-icon { width: 13px; height: 13px; }
    .dot { position: absolute; right: 0; top: -4px; width: 8px; height: 8px; border-radius: 50%; background: #f00; }
  </style>
  <index-quote down><span slot="name">上证</span><span>3264.10</span><span>-0.77</span><span>-0.02%</span><span slot="turnover">4804.18亿</span></index-quote>
  <index-quote><span slot="name">深指</span><span>11185.68</span><span>36.67</span><span>0.33%</span><span slot="turnover">6418.03亿</span></index-quote>
  <index-quote><span slot="name">平价</span><span>17.13</span><span>0.13</span><span>0.76%</span><span slot="turnover">1.12万亿</span></index-quote>
  <index-quote><span slot="name">创指</span><span>2294.06</span><span>34.86</span><span>1.54%</span><span slot="turnover">945.95亿</span></index-quote>
  <index-quote down><span slot="name">科50</span><span>1069.01</span><span>-7.86</span><span>-0.73%</span><span slot="turnover">1013.69亿</span></index-quote>
  <div class="tools">
    <span><app-icon name="note"></app-icon></span><span><app-icon name="bell"></app-icon></span>
    <span><app-icon name="target"></app-icon></span><span><app-icon name="chart"></app-icon></span>
    <span><app-icon name="chat"></app-icon><i class="dot"></i></span><span><app-icon name="signal"></app-icon></span>
  </div>`);

define('trade-app', `
  <style>
    :host { display: flex; flex-direction: column; min-height: 100vh; }
    main { display: flex; flex: 1; }
    chart-column { flex: 1; min-width: 0; }
    sector-panel { flex: 0 0 600px; }
  </style>
  <title-bar></title-bar>
  <nav-tabs></nav-tabs>
  <main>
    <side-strip></side-strip>
    <chart-column></chart-column>
    <sector-panel></sector-panel>
  </main>
  <news-ticker></news-ticker>
  <index-bar></index-bar>`);
</script>
</body>
</html>
